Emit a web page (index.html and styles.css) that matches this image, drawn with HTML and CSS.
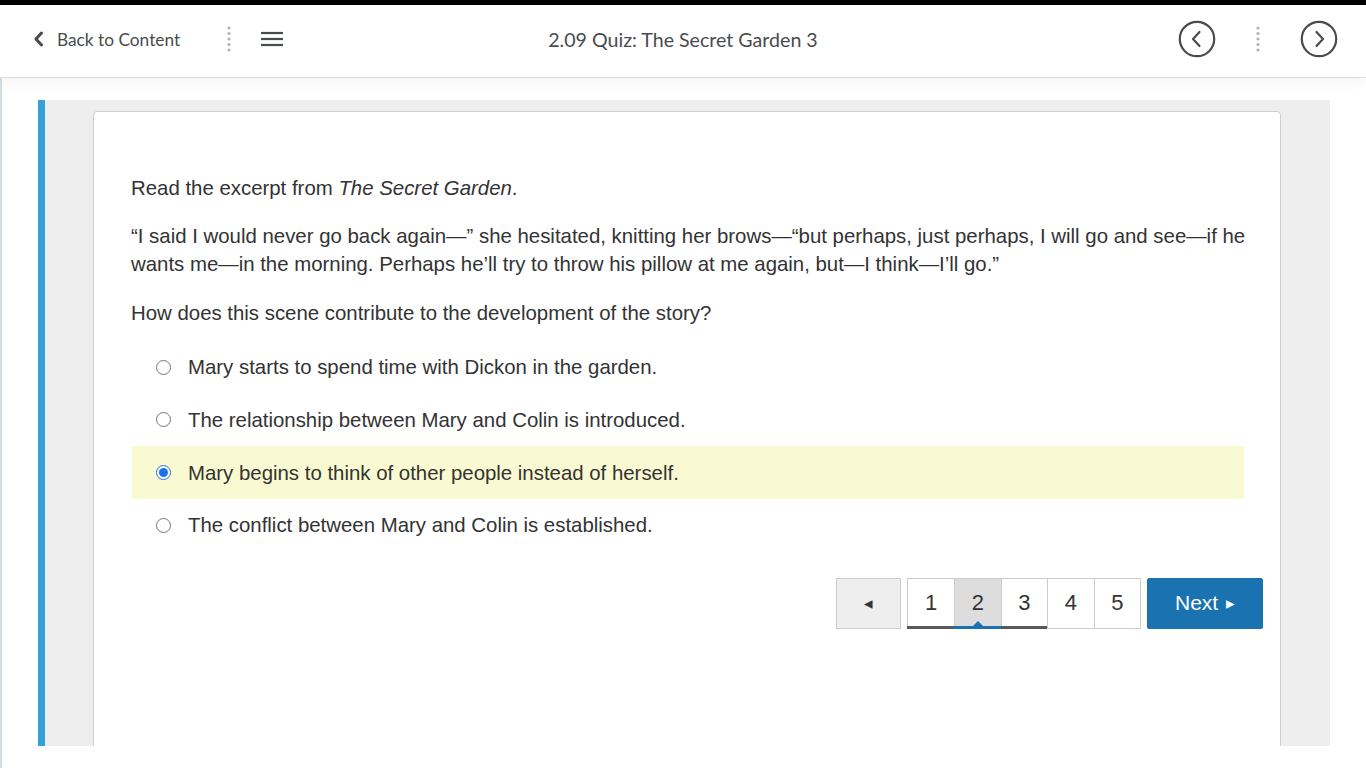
FILE: index.html
```html
<!DOCTYPE html>
<html lang="en">
<head>
<meta charset="utf-8">
<title>2.09 Quiz: The Secret Garden 3</title>
<link rel="stylesheet" href="styles.css">
</head>
<body>
<div class="topbar"></div>
<header class="header">
  <div class="h-left">
    <a class="back" href="#">
      <svg class="back-chev" width="11" height="16" viewBox="0 0 11 16"><path d="M8.5 2 L3 8 L8.5 14" fill="none" stroke="#494c4e" stroke-width="3" stroke-linecap="round" stroke-linejoin="round"/></svg>
      <span>Back to Content</span>
    </a>
    <svg class="sep sep-left" width="4" height="28" viewBox="0 0 4 28"><g fill="#b3b3b3"><circle cx="2" cy="3" r="1.6"/><circle cx="2" cy="8.5" r="1.6"/><circle cx="2" cy="14" r="1.6"/><circle cx="2" cy="19.5" r="1.6"/><circle cx="2" cy="25" r="1.6"/></g></svg>
    <svg class="hamburger" width="22" height="16" viewBox="0 0 22 16"><g stroke="#494c4e" stroke-width="2.2"><line x1="0" y1="2" x2="22" y2="2"/><line x1="0" y1="8" x2="22" y2="8"/><line x1="0" y1="14" x2="22" y2="14"/></g></svg>
  </div>
  <div class="h-title">2.09 Quiz: The Secret Garden 3</div>
  <div class="h-right">
    <svg class="circ" width="38" height="38" viewBox="0 0 38 38"><circle cx="19" cy="19" r="17.2" fill="none" stroke="#494c4e" stroke-width="2.2"/><path d="M21.5 12 L15 19 L21.5 26" fill="none" stroke="#494c4e" stroke-width="2.2" stroke-linecap="round" stroke-linejoin="round"/></svg>
    <svg class="sep" width="4" height="28" viewBox="0 0 4 28"><g fill="#b3b3b3"><circle cx="2" cy="3" r="1.6"/><circle cx="2" cy="8.5" r="1.6"/><circle cx="2" cy="14" r="1.6"/><circle cx="2" cy="19.5" r="1.6"/><circle cx="2" cy="25" r="1.6"/></g></svg>
    <svg class="circ" width="38" height="38" viewBox="0 0 38 38"><circle cx="19" cy="19" r="17.2" fill="none" stroke="#494c4e" stroke-width="2.2"/><path d="M16.5 12 L23 19 L16.5 26" fill="none" stroke="#494c4e" stroke-width="2.2" stroke-linecap="round" stroke-linejoin="round"/></svg>
  </div>
</header>
<main class="main">
  <section class="panel">
    <div class="card">
      <p class="para">Read the excerpt from <em>The Secret Garden</em>.</p>
      <p class="para">“I said I would never go back again—” she hesitated, knitting her brows—“but perhaps, just perhaps, I will go and see—if he wants me—in the morning. Perhaps he’ll try to throw his pillow at me again, but—I think—I’ll go.”</p>
      <p class="para">How does this scene contribute to the development of the story?</p>
      <div class="options">
        <label class="opt"><input type="radio" name="q"><span>Mary starts to spend time with Dickon in the garden.</span></label>
        <label class="opt"><input type="radio" name="q"><span>The relationship between Mary and Colin is introduced.</span></label>
        <label class="opt opt-sel"><input type="radio" name="q" checked><span>Mary begins to think of other people instead of herself.</span></label>
        <label class="opt"><input type="radio" name="q"><span>The conflict between Mary and Colin is established.</span></label>
      </div>
      <nav class="pager">
        <button class="pbtn prev">◂</button>
        <div class="pages">
          <button class="pnum done">1</button>
          <button class="pnum done current">2</button>
          <button class="pnum done">3</button>
          <button class="pnum">4</button>
          <button class="pnum">5</button>
        </div>
        <button class="next">Next <span class="tri">▸</span></button>
      </nav>
    </div>
  </section>
</main>
</body>
</html>
```
FILE: styles.css
```css
* { box-sizing: border-box; }
html, body { margin: 0; padding: 0; }
body {
  width: 1366px;
  height: 768px;
  overflow: hidden;
  background: #fff;
  font-family: "Liberation Sans", Arial, sans-serif;
  color: #333;
}
.topbar { height: 5px; background: #000; }
.header {
  height: 73px;
  border-bottom: 1px solid #dcdcdc;
  display: grid;
  grid-template-columns: 1fr auto 1fr;
  align-items: center;
  padding-bottom: 4px;
  position: relative;
  z-index: 2;
  box-shadow: 0 3px 14px rgba(0,0,0,0.06);
  font-family: Lato, "Liberation Sans", sans-serif;
  color: #494c4e;
  background: #fff;
}
.h-left { display: flex; align-items: center; padding-left: 33px; }
.back { display: flex; align-items: center; text-decoration: none; color: #494c4e; font-size: 17.3px; }
.back-chev { margin-right: 13px; }
.sep { display: block; }
.sep-left { margin-left: 47px; margin-right: 30px; }
.hamburger { display: block; }
.h-title { font-size: 19.6px; text-align: center; }
.h-right { display: flex; align-items: center; justify-content: flex-end; padding-right: 28px; gap: 40px; }
.circ { display: block; }
.main {
  height: 690px;
  border-left: 2px solid #d6dee5;
  padding: 22px 36px 0 36px;
}
.panel {
  height: 646px;
  background: #eeeeee;
  border-left: 7px solid #35a1d8;
  padding: 11px 49px 0 48px;
  overflow: hidden;
}
.card {
  background: #fff;
  border: 1px solid #cfcfcf;
  border-radius: 4px 4px 0 0;
  min-height: 700px;
  padding: 62px 34px 0 37px;
  font-size: 20.4px;
  line-height: 28px;
}
.para { margin: 0 0 20px 0; }
.para:nth-child(3) { margin-top: 21px; }
.para em { font-style: italic; }
.options { margin-top: -6px; margin-right: 2px; display: flex; flex-direction: column; }
.opt {
  height: 52.67px;
  display: flex;
  align-items: center;
  padding-left: 24px;
  margin-left: 1px;
}
.opt input {
  margin: 0 17px 0 0;
  width: 15px;
  height: 15px;
  accent-color: #1a73e8;
}
.opt-sel { background: #fafad2; }
.pager {
  display: flex;
  justify-content: flex-end;
  align-items: stretch;
  margin-top: 26px;
  margin-right: -17px;
  height: 51px;
  font-family: "Liberation Sans", Arial, sans-serif;
}
.pbtn, .pnum, .next {
  font-family: inherit;
  border: 1px solid #cccccc;
  background: #fff;
  color: #333;
  font-size: 22px;
  padding: 0;
  cursor: pointer;
}
.prev { width: 65px; background: #eeeeee; font-size: 17px; color: #333; margin-right: 6px; }
.pages { display: flex; }
.pnum { width: 46.5px; position: relative; border-left-width: 0; }
.pnum:first-child { border-left-width: 1px; width: 48px; }
.pnum.done::after {
  content: "";
  position: absolute;
  left: -1px; right: 0; bottom: -1px;
  height: 3px;
  background: #565a5c;
}
.pnum.current { background: #dddddd; }
.pnum.current::after { background: #1a72b0; }
.pnum.current::before {
  content: "";
  position: absolute;
  left: 50%;
  bottom: 2px;
  margin-left: -5px;
  border-left: 5px solid transparent;
  border-right: 5px solid transparent;
  border-bottom: 5px solid #1a72b0;
}
.next {
  width: 116px;
  margin-left: 6px;
  background: #1a72b0;
  border-color: #1a72b0;
  color: #fff;
  border-radius: 2px;
  font-size: 21px;
}
.tri { font-size: 17px; margin-left: 2px; position: relative; top: -1px; }
```
